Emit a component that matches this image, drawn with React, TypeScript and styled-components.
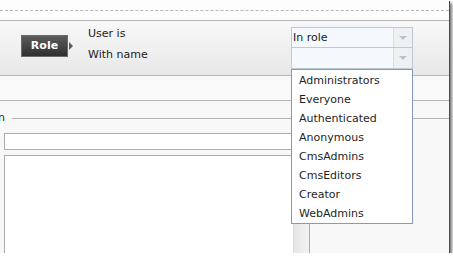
import React from "react";
import styled, { createGlobalStyle } from "styled-components";

const Global = createGlobalStyle`
  html, body { margin: 0; padding: 0; background: #ffffff; overflow: hidden; }
  * { box-sizing: border-box; }
`;

const Frame = styled.div`
  width: 449px;
  height: 253px;
  overflow: hidden;
  background: #fcfcfc;
  display: flex;
  flex-direction: column;
  font-family: "DejaVu Sans", Verdana, sans-serif;
  font-size: 11px;
  color: #1c1c1c;
  box-shadow: 1px 1px 0 #4a4a4a, 3px 3px 3px rgba(0, 0, 0, 0.55);
`;

const TopStrip = styled.div`
  height: 20px;
  padding-top: 10px;
  background: #fdfdfd;
`;

const DashedLine = styled.div`
  border-top: 1px dashed #b8b8b8;
`;

const Header = styled.div`
  position: relative;
  height: 56px;
  border-top: 1px solid #b6b6b6;
  border-bottom: 1px solid #b6b6b6;
  background: linear-gradient(#f8f8f8, #e8e8e8);
  display: flex;
  align-items: flex-start;
  padding: 0 36px 0 21px;
`;

const Badge = styled.div`
  position: relative;
  margin-top: 14px;
  width: 47px;
  height: 22px;
  border: 1px solid #6b6b6b;
  background: linear-gradient(#5c5c5c, #2f2f2f);
  color: #ffffff;
  font-weight: bold;
  font-size: 11px;
  line-height: 20px;
  text-align: center;
  &::after {
    content: "";
    position: absolute;
    right: -6px;
    top: 6px;
    border-top: 4px solid transparent;
    border-bottom: 4px solid transparent;
    border-left: 4px solid #5a5a5a;
  }
`;

const Labels = styled.div`
  margin-left: 20px;
  padding-top: 2px;
  line-height: 21px;
  display: flex;
  flex-direction: column;
`;

const SelectGroup = styled.div`
  position: relative;
  margin-left: auto;
  margin-top: 6px;
  width: 122px;
  display: flex;
  flex-direction: column;
`;

const Select = styled.div`
  height: 21px;
  display: flex;
  border: 1px solid #bccad6;
  background: #f5f9fd;
  & + & {
    margin-top: 0;
    border-top: none;
    height: 21px;
  }
`;

const SelectValue = styled.div`
  flex: 1;
  padding-left: 1px;
  line-height: 19px;
  color: #1a1a1a;
`;

const ArrowButton = styled.div`
  width: 19px;
  border-left: 1px solid #d9dfe5;
  background: #eef0f2;
  display: flex;
  align-items: center;
  justify-content: center;
  &::before {
    content: "";
    border-top: 4px solid #b7c3ce;
    border-left: 4px solid transparent;
    border-right: 4px solid transparent;
  }
`;

const DropList = styled.ul`
  position: absolute;
  left: 0;
  top: 100%;
  width: 122px;
  margin: 0;
  padding: 1px 0 0 0;
  list-style: none;
  background: #ffffff;
  border: 1px solid #7f9dbb;
  z-index: 2;
`;

const DropItem = styled.li`
  padding-left: 7px;
  line-height: 19px;
  color: #1e1e1e;
  white-space: nowrap;
`;

const Band = styled.div`
  height: 25px;
  background: #f9f9f9;
  border-bottom: 1px solid #b6b6b6;
`;

const Main = styled.div`
  flex: 1;
  min-height: 0;
  background: #f8f8f8;
  display: flex;
  flex-direction: column;
`;

const LegendRow = styled.div`
  height: 32px;
  display: flex;
  align-items: flex-start;
  flex: none;
`;

const Legend = styled.div`
  width: 5px;
  overflow: hidden;
  display: flex;
  justify-content: flex-end;
  white-space: nowrap;
  margin-top: 10px;
  line-height: 13px;
  color: #1c1c1c;
`;

const LegendLine = styled.div`
  flex: 1;
  height: 1px;
  margin-top: 17px;
  margin-left: 7px;
  background: #b4b4b4;
`;

const Body = styled.div`
  flex: 1;
  min-height: 0;
  display: flex;
  overflow: hidden;
`;

const LeftCol = styled.div`
  width: 310px;
  padding-left: 4px;
  display: flex;
  flex-direction: column;
`;

const TextInput = styled.div`
  width: 289px;
  height: 17px;
  border: 1px solid #acacac;
  background: #ffffff;
  flex: none;
`;

const TextArea = styled.div`
  margin-top: 5px;
  width: 306px;
  height: 110px;
  flex: none;
  display: flex;
  border: 1px solid #acacac;
  background: #ffffff;
`;

const TextAreaContent = styled.div`
  flex: 1;
`;

const ScrollTrack = styled.div`
  width: 16px;
  background: linear-gradient(to right, #e6e6e6, #f2f2f2);
  border-left: 1px solid #dadada;
`;

const RightCol = styled.div`
  flex: 1;
  background: #f8f8f8;
`;

const roles = [
  "Administrators",
  "Everyone",
  "Authenticated",
  "Anonymous",
  "CmsAdmins",
  "CmsEditors",
  "Creator",
  "WebAdmins",
];

export default function App() {
  return (
    <>
      <Global />
      <Frame>
        <TopStrip>
          <DashedLine />
        </TopStrip>
        <Header>
          <Badge>Role</Badge>
          <Labels>
            <span>User is</span>
            <span>With name</span>
          </Labels>
          <SelectGroup>
            <Select>
              <SelectValue>In role</SelectValue>
              <ArrowButton />
            </Select>
            <Select>
              <SelectValue />
              <ArrowButton />
            </Select>
            <DropList>
              {roles.map((r) => (
                <DropItem key={r}>{r}</DropItem>
              ))}
            </DropList>
          </SelectGroup>
        </Header>
        <Band />
        <Main>
          <LegendRow>
            <Legend>
              <span>Description</span>
            </Legend>
            <LegendLine />
          </LegendRow>
          <Body>
            <LeftCol>
              <TextInput />
              <TextArea>
                <TextAreaContent />
                <ScrollTrack />
              </TextArea>
            </LeftCol>
            <RightCol />
          </Body>
        </Main>
      </Frame>
    </>
  );
}
